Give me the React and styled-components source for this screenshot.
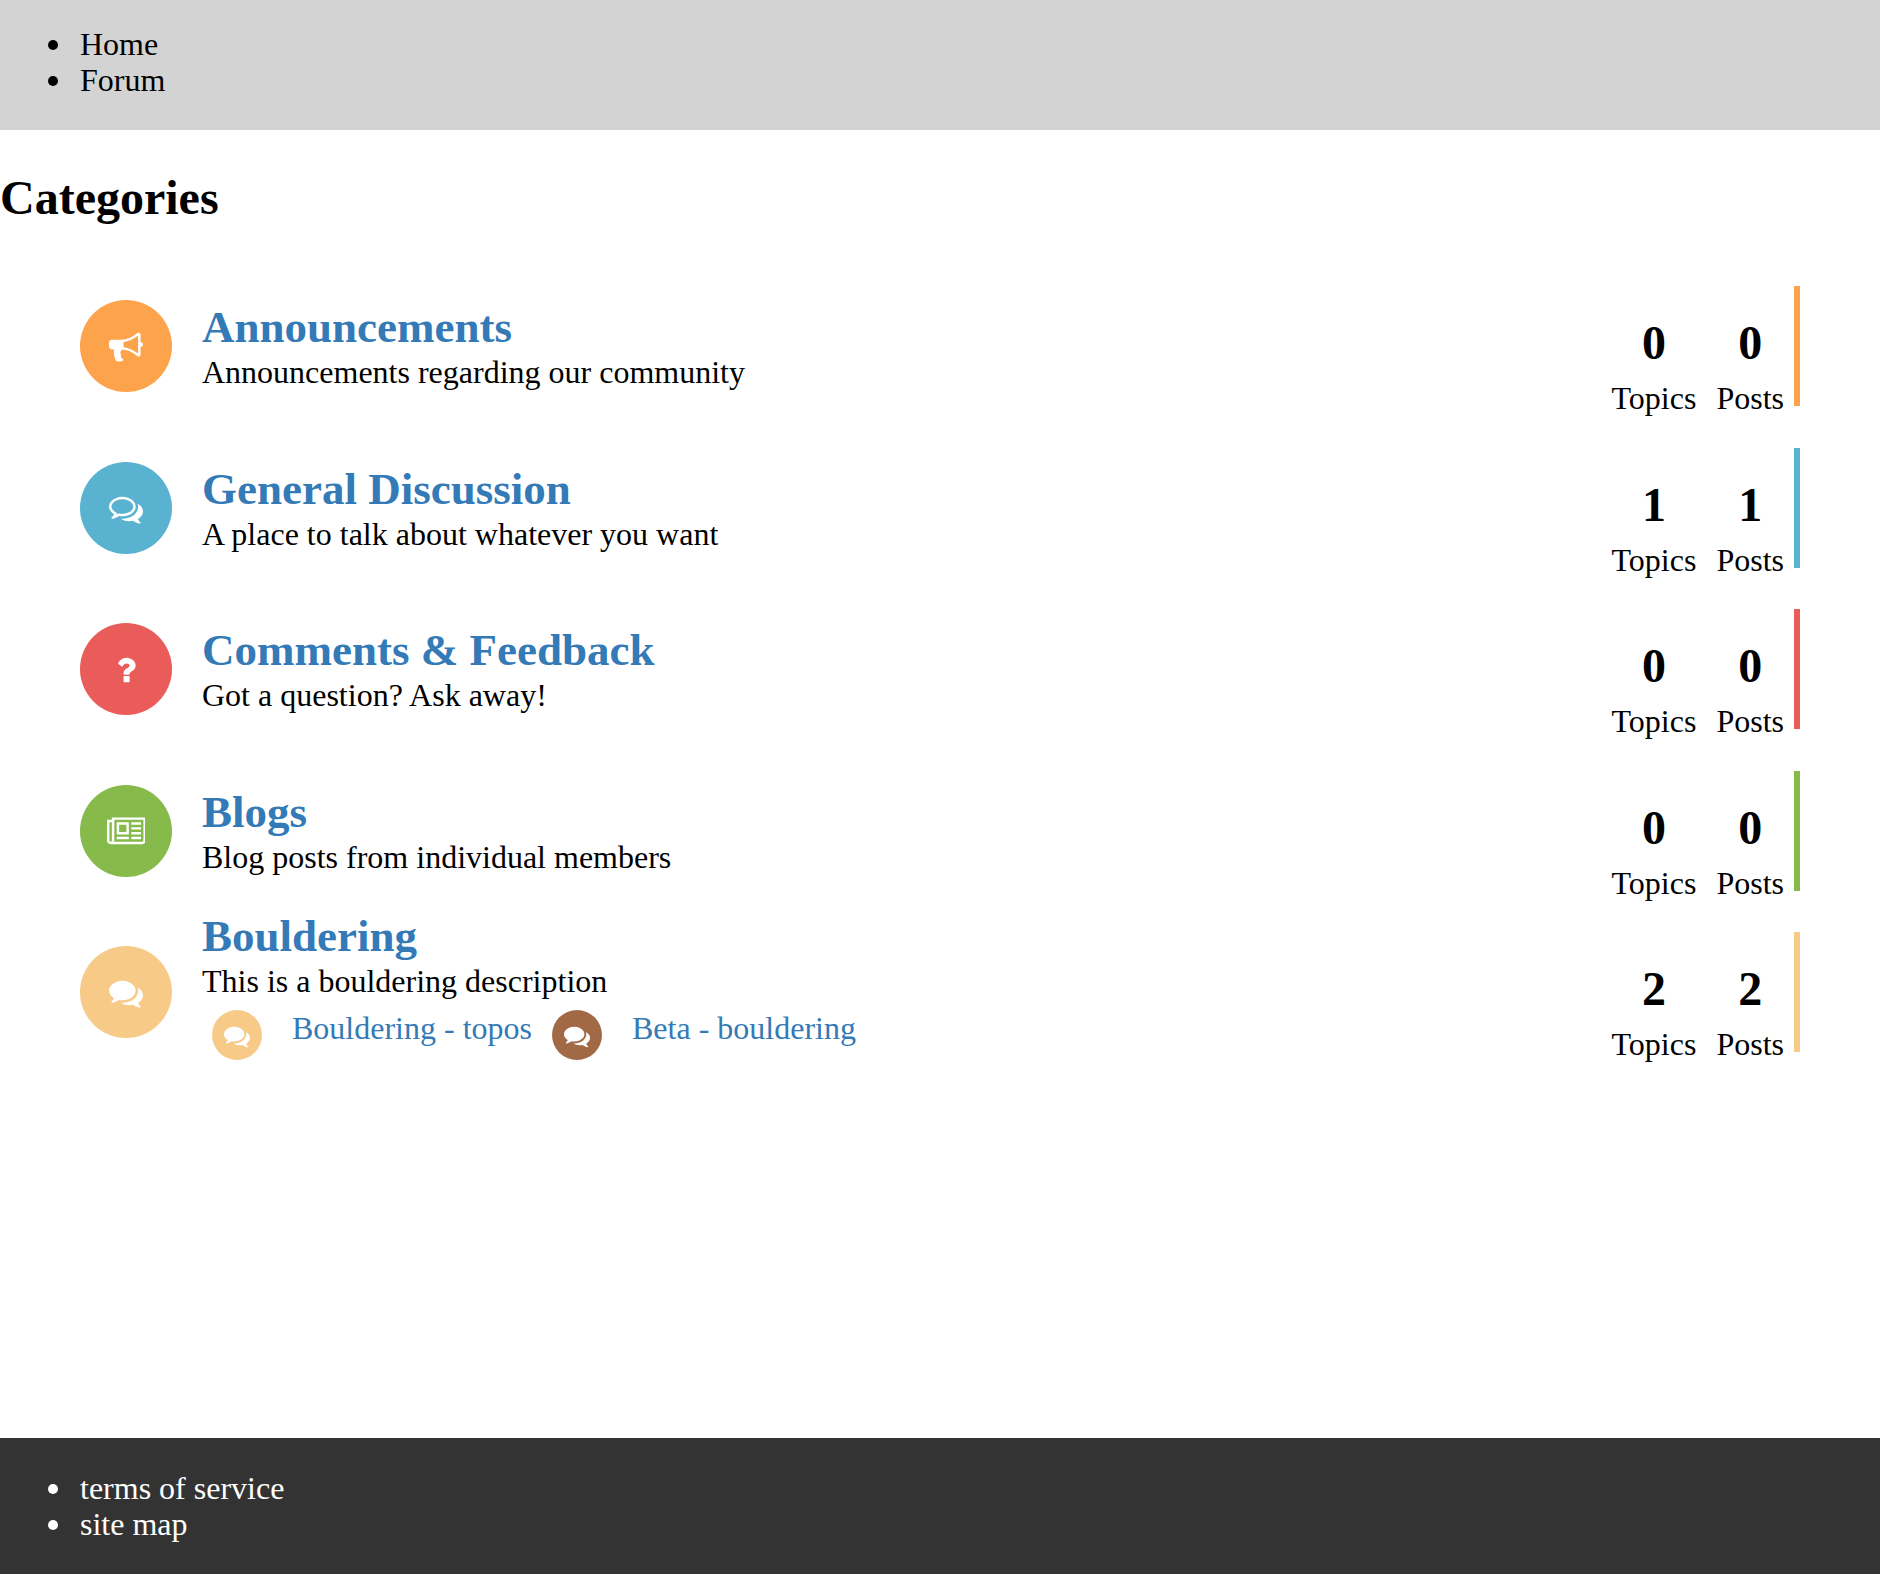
import React from 'react';
import styled, { createGlobalStyle, ThemeProvider } from 'styled-components';

const theme = {
    color: {
        black: '#000',
        white: '#fff',
        dark: '#333',
        grey: '#d3d3d3',
        link: '#337ab7',
    },
    fontSize: {
        m: '32px',
        l: '45px',
        xl: '48px',
    },
};

const GlobalStyle = createGlobalStyle`
    *, *::before, *::after {
        box-sizing: border-box;
    }

    body {
        margin: 0;
        background-color: ${({ theme }) => theme.color.white};
        color: ${({ theme }) => theme.color.black};
        font-family: 'Liberation Serif', 'Times New Roman', serif;
        font-size: ${({ theme }) => theme.fontSize.m};
        line-height: 36px;
    }
`;

const Page = styled.div`
    display: flex;
    flex-direction: column;
    min-height: 100vh;
`;

const Header = styled.header`
    padding: 26px 0 32px;
    background-color: ${({ theme }) => theme.color.grey};
`;

const Main = styled.main`
    flex: 1;
`;

const Footer = styled.footer`
    padding: 32px 0;
    background-color: ${({ theme }) => theme.color.dark};
    color: ${({ theme }) => theme.color.white};
`;

const LinkList = styled.ul`
    margin: 0;
    padding: 0 0 0 48px;
    list-style: none;
`;

const LinkItem = styled.li`
    display: flex;

    &::before {
        content: '';
        width: 10px;
        height: 10px;
        margin: 14px 22px 0 0;
        border-radius: 50%;
        background-color: currentColor;
    }
`;

const PlainLink = styled.a`
    color: inherit;
    text-decoration: none;
`;

const PageTitle = styled.h1`
    margin: 41px 0 61px;
    font-size: ${({ theme }) => theme.fontSize.xl};
    line-height: 54px;
`;

const CategoryList = styled.ul`
    display: flex;
    flex-direction: column;
    justify-content: space-between;
    min-height: 766px;
    margin: 0;
    padding: 0 80px;
    list-style: none;
`;

const CategoryRow = styled.li`
    display: flex;
    align-items: center;
    height: 120px;
`;

const IconCircle = styled.span`
    display: flex;
    flex-shrink: 0;
    align-items: center;
    justify-content: center;
    width: ${({ $small }) => $small ? '50px' : '92px'};
    height: ${({ $small }) => $small ? '50px' : '92px'};
    margin-right: 30px;
    padding-top: 2px;
    border-radius: 50%;
    background-color: ${({ $color }) => $color};
    color: ${({ theme }) => theme.color.white};
`;

const StyledIcon = styled.svg`
    display: block;
    height: ${({ $small }) => $small ? '26px' : '34px'};
    fill: currentColor;
`;

const CategoryInfo = styled.div`
    flex: 1;
`;

const CategoryTitle = styled.h2`
    margin: 0 0 2px;
    font-size: ${({ theme }) => theme.fontSize.l};
    line-height: 50px;
`;

const CategoryLink = styled.a`
    color: ${({ theme }) => theme.color.link};
    text-decoration: none;
`;

const Description = styled.p`
    margin: 0;
`;

const SubcategoryList = styled.ul`
    display: flex;
    flex-wrap: wrap;
    margin: 0;
    padding: 11px 0 13px;
    list-style: none;
`;

const Subcategory = styled.li`
    display: flex;
    align-items: flex-start;
    margin: 0 10px;
`;

const Stats = styled.div`
    display: flex;
    align-self: flex-start;
    padding-top: 30px;
`;

const Stat = styled.div`
    margin: 0 10px;
    text-align: center;
`;

const StatNumber = styled.div`
    margin-bottom: 10px;
    font-size: ${({ theme }) => theme.fontSize.xl};
    font-weight: bold;
    line-height: 54px;
`;

const ColorBar = styled.div`
    align-self: stretch;
    width: 6px;
    background-color: ${({ $color }) => $color};
`;

const icons = {
    bullhorn: {
        width: 1792,
        path: 'M1664 640q53 0 90.5 37.5t37.5 90.5-37.5 90.5-90.5 37.5v384q0 52-38 90t-90 38q-417-347-812-380-58 19-91 66t-31 100.5 40 92.5q-20 33-23 65.5t6 58 33.5 55 48 50 61.5 50.5q-29 58-111.5 83t-168.5 11.5-132-55.5q-7-23-29.5-87.5t-32-94.5-23-89-15-101 3.5-98.5 22-110.5h-122q-66 0-113-47t-47-113v-192q0-66 47-113t113-47h480q435 0 896-384 52 0 90 38t38 90v384zm-128 604v-954q-394 302-768 343v270q377 42 768 341z',
    },
    commentsOutline: {
        width: 1792,
        path: 'M704 384q-153 0-286 52t-211.5 141-78.5 191q0 82 53 158t149 132l97 56-35 84q34-20 62-39l44-31 53 10q78 14 153 14 153 0 286-52t211.5-141 78.5-191-78.5-191-211.5-141-286-52zm0-128q191 0 353.5 68.5t256.5 186.5 94 257-94 257-256.5 186.5-353.5 68.5q-86 0-176-16-124 88-278 128-36 9-86 16h-3q-11 0-20.5-8t-11.5-21q-1-3-1-6.5t.5-6.5 2-6l2.5-5t3.5-5.5 4-5 4.5-5 4-4.5q5-6 23-25t26-29.5 22.5-29 25-38.5 20.5-44q-124-72-195-177t-71-224q0-139 94-257t256.5-186.5 353.5-68.5zm822 1169q10 24 20.5 44t25 38.5 22.5 29 26 29.5 23 25q1 1 4 4.5t4.5 5 4 5 3.5 5.5l2.5 5t2 6 .5 6.5-1 6.5q-3 14-13 22t-22 7q-50-7-86-16-154-40-278-128-90 16-176 16-271 0-472-132 58 4 88 4 161 0 309-45t264-129q125-92 192-212t67-254q0-77-23-152 129 71 204 178t75 230q0 120-71 224.5t-195 176.5z',
    },
    comments: {
        width: 1792,
        path: 'M1408 768q0 139-94 257t-256.5 186.5-353.5 68.5q-86 0-176-16-124 88-278 128-36 9-86 16h-3q-11 0-20.5-8t-11.5-21q-1-3-1-6.5t.5-6.5 2-6l2.5-5t3.5-5.5 4-5 4.5-5 4-4.5q5-6 23-25t26-29.5 22.5-29 25-38.5 20.5-44q-124-72-195-177t-71-224q0-139 94-257t256.5-186.5 353.5-68.5 353.5 68.5 256.5 186.5 94 257zm384 256q0 120-71 224.5t-195 176.5q10 24 20.5 44t25 38.5 22.5 29 26 29.5 23 25q1 1 4 4.5t4.5 5 4 5 3.5 5.5l2.5 5t2 6 .5 6.5-1 6.5q-3 14-13 22t-22 7q-50-7-86-16-154-40-278-128-90 16-176 16-271 0-472-132 58 4 88 4 161 0 309-45t264-129q125-92 192-212t67-254q0-77-23-152 129 71 204 178t75 230z',
    },
    question: {
        width: 1792,
        path: 'M1088 1256v240q0 16-12 28t-28 12h-240q-16 0-28-12t-12-28v-240q0-16 12-28t28-12h240q16 0 28 12t12 28zm316-600q0 54-15.5 101t-35 76.5-55 59.5-57.5 43.5-61 35.5q-41 23-68.5 65t-27.5 67q0 17-12 32.5t-28 15.5h-240q-15 0-25.5-18.5t-10.5-37.5v-45q0-83 65-156.5t143-108.5q59-27 84-56t25-76q0-42-46.5-74t-107.5-32q-65 0-108 29-35 25-107 115-13 16-31 16-12 0-25-8l-164-125q-13-10-15.5-25t5.5-28q160-266 464-266 80 0 161 31t146 83 106 127.5 41 158.5z',
    },
    newspaper: {
        width: 2048,
        path: 'M1024 512h-384v384h384v-384zm128 640v128h-640v-128h640zm0-768v640h-640v-640h640zm640 768v128h-512v-128h512zm0-256v128h-512v-128h512zm0-256v128h-512v-128h512zm0-256v128h-512v-128h512zm-1536 960v-960h-128v960q0 26 19 45t45 19 45-19 19-45zm1664 0v-1088h-1536v1088q0 33-11 64h1483q26 0 45-19t19-45zm128-1216v1216q0 80-56 136t-136 56h-1664q-80 0-136-56t-56-136v-1088h256v-128h1792z',
    },
};

const categories = [
    { name: 'Announcements', description: 'Announcements regarding our community', icon: 'bullhorn', color: '#fda34b', topics: 0, posts: 0 },
    { name: 'General Discussion', description: 'A place to talk about whatever you want', icon: 'commentsOutline', color: '#59b3d0', topics: 1, posts: 1 },
    { name: 'Comments & Feedback', description: 'Got a question? Ask away!', icon: 'question', color: '#e95c5a', topics: 0, posts: 0 },
    { name: 'Blogs', description: 'Blog posts from individual members', icon: 'newspaper', color: '#86ba4b', topics: 0, posts: 0 },
    {
        name: 'Bouldering',
        description: 'This is a bouldering description',
        icon: 'comments',
        color: '#f7ca88',
        topics: 2,
        posts: 2,
        subcategories: [
            { name: 'Bouldering - topos', icon: 'comments', color: '#f7ca88' },
            { name: 'Beta - bouldering', icon: 'comments', color: '#a16946' },
        ],
    },
];

const CategoryIcon = ({ icon, color, small }) => (
    <IconCircle $color={color} $small={small}>
        <StyledIcon $small={small} viewBox={`0 0 ${icons[icon].width} 1792`} aria-hidden='true'>
            <path d={icons[icon].path} />
        </StyledIcon>
    </IconCircle>
);

const Category = ({ name, description, icon, color, topics, posts, subcategories = [] }) => (
    <CategoryRow>
        <CategoryIcon icon={icon} color={color} />
        <CategoryInfo>
            <CategoryTitle>
                <CategoryLink href='#'>{ name }</CategoryLink>
            </CategoryTitle>
            <Description>{ description }</Description>
            {
                subcategories.length > 0 && (
                    <SubcategoryList>
                        {
                            subcategories.map(item => (
                                <Subcategory key={item.name}>
                                    <CategoryIcon icon={item.icon} color={item.color} small />
                                    <CategoryLink href='#'>{ item.name }</CategoryLink>
                                </Subcategory>
                            ))
                        }
                    </SubcategoryList>
                )
            }
        </CategoryInfo>
        <Stats>
            <Stat>
                <StatNumber>{ topics }</StatNumber>
                Topics
            </Stat>
            <Stat>
                <StatNumber>{ posts }</StatNumber>
                Posts
            </Stat>
        </Stats>
        <ColorBar $color={color} />
    </CategoryRow>
);

const App = () => (
    <ThemeProvider theme={theme}>
        <GlobalStyle />
        <Page>
            <Header>
                <nav>
                    <LinkList>
                        <LinkItem><PlainLink href='#'>Home</PlainLink></LinkItem>
                        <LinkItem><PlainLink href='#'>Forum</PlainLink></LinkItem>
                    </LinkList>
                </nav>
            </Header>
            <Main>
                <PageTitle>Categories</PageTitle>
                <CategoryList>
                    {
                        categories.map(category => (
                            <Category key={category.name} {...category} />
                        ))
                    }
                </CategoryList>
            </Main>
            <Footer>
                <LinkList>
                    <LinkItem><PlainLink href='#'>terms of service</PlainLink></LinkItem>
                    <LinkItem><PlainLink href='#'>site map</PlainLink></LinkItem>
                </LinkList>
            </Footer>
        </Page>
    </ThemeProvider>
);

export default App;
